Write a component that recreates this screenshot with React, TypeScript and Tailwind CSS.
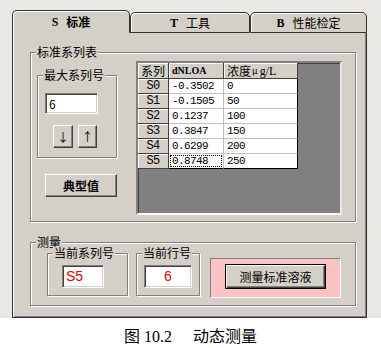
import React from 'react';

const raised =
  'flex items-center justify-center bg-[#d4d0c8] border border-t-white border-l-white border-b-[#404040] border-r-[#404040] shadow-[inset_-1px_-1px_0_#808080]';
const sunken =
  'flex items-center bg-white border border-t-[#808080] border-l-[#808080] border-b-white border-r-white shadow-[inset_1px_1px_0_#404040,inset_-1px_-1px_0_#d4d0c8]';

function Group({ title, className, children }: { title: string; className?: string; children?: React.ReactNode }) {
  return (
    <div className={`relative border border-[#808080] shadow-[inset_1px_1px_0_#fff,1px_1px_0_#fff] ${className ?? ''}`}>
      <span className="absolute left-[5px] -top-[7px] bg-[#d4d0c8] px-[1px] text-[12px] leading-[12px] text-black">
        {title}
      </span>
      {children}
    </div>
  );
}

const rows = [
  ['S0', '-0.3502', '0'],
  ['S1', '-0.1505', '50'],
  ['S2', '0.1237', '100'],
  ['S3', '0.3847', '150'],
  ['S4', '0.6299', '200'],
  ['S5', '0.8748', '250'],
];

const fixedCell =
  'flex items-center justify-center bg-[#d4d0c8] border-r border-b border-[#404040] shadow-[inset_1px_1px_0_#fff]';
const num = "font-['Liberation_Mono',monospace] text-[11px] tracking-[-0.6px]";

function Grid() {
  return (
    <div className="w-[206px] h-[154px] bg-[#808080] border-2 border-t-[#808080] border-l-[#808080] border-b-white border-r-[#e8e8e8] shadow-[inset_1px_1px_0_#404040]">
      <div className="grid grid-cols-[31px_55px_74px] w-[160px]">
        <div className={`${fixedCell} h-[16px] text-[12px]`}>系列</div>
        <div className={`${fixedCell} h-[16px] justify-start pl-[3px] font-['Liberation_Serif',serif] font-bold text-[10px]`}>dNLOA</div>
        <div className={`${fixedCell} h-[16px] justify-start pl-[3px] text-[12px]`}>
          浓度<span className="text-[9px] ml-[1px]">μ</span>
          <span className="font-['Liberation_Serif',serif] text-[12px] ml-[2px]">g/L</span>
        </div>
        {rows.map((r, i) => (
          <React.Fragment key={r[0]}>
            <div className={`${fixedCell} h-[15px] ${num} text-[12px]`}>{r[0]}</div>
            <div className={`h-[15px] bg-white border-r border-b border-[#c0c0c0] ${i === 5 ? 'border-b-black' : ''} p-[1px]`}>
              <div className={`h-full flex items-center pl-[2px] ${num} ${i === 5 ? 'outline-1 outline-dotted outline-black -outline-offset-1' : ''}`}>
                {r[1]}
              </div>
            </div>
            <div className={`h-[15px] flex items-center pl-[3px] bg-white border-r border-b border-[#c0c0c0] border-r-black ${i === 5 ? 'border-b-black' : ''} ${num}`}>
              {r[2]}
            </div>
          </React.Fragment>
        ))}
      </div>
    </div>
  );
}

export default function App() {
  return (
    <div className="w-[381px] h-[348px] font-['Noto_Sans_CJK_SC','Liberation_Sans',sans-serif] text-[12px] text-black">
      <div className="bg-[#e9e8e3] pt-[10px] pl-[12px] h-[318px]">
        {/* tabs */}
        <div className="flex items-end h-[23px] w-[355px]">
          <div className="w-[118px] h-[23px] flex items-center justify-center gap-[8px] bg-[#d4d0c8] border border-b-0 border-[#333] rounded-t-[5px] shadow-[inset_1px_1px_0_#fff] font-bold">
            <span className="font-['Liberation_Serif',serif]">S</span>标准
          </div>
          <div className="w-[120px] h-[21px] flex items-center justify-center gap-[8px] bg-[#d4d0c8] border border-[#333] rounded-t-[5px] shadow-[inset_1px_1px_0_#fff]">
            <span className="font-['Liberation_Serif',serif] font-bold">T</span>工具
          </div>
          <div className="w-[117px] h-[21px] flex items-center justify-center gap-[8px] bg-[#d4d0c8] border border-[#333] rounded-t-[5px] shadow-[inset_1px_1px_0_#fff]">
            <span className="font-['Liberation_Serif',serif] font-bold">B</span>性能检定
          </div>
        </div>

        {/* page */}
        <div className="w-[355px] h-[285px] bg-[#d4d0c8] border-l border-r border-b border-[#333] shadow-[inset_1px_0_0_#fff,inset_-1px_-1px_0_#808080] pl-[17px] pt-[19px]">
          <Group title="标准系列表" className="w-[326px] h-[170px] flex items-start">
            <div className="ml-[6px] mt-[22px] flex flex-col">
              <Group title="最大系列号" className="w-[80px] h-[83px] pl-[7px] pt-[17px]">
                <div className={`${sunken} w-[53px] h-[21px] pl-[3px]`}>6</div>
                <div className="flex gap-[5px] mt-[11px] ml-[8px]">
                  <div className={`${raised} w-[20px] h-[23px]`}>↓</div>
                  <div className={`${raised} w-[19px] h-[23px]`}>↑</div>
                </div>
              </Group>
              <div className={`${raised} w-[72px] h-[23px] ml-[8px] mt-[16px] font-bold`}>典型值</div>
            </div>
            <div className="ml-auto mr-[13px] mt-[8px]">
              <Grid />
            </div>
          </Group>

          <Group title="测量" className="w-[326px] h-[64px] mt-[20px] flex items-start pl-[16px] pt-[10px]">
            <Group title="当前系列号" className="w-[81px] h-[43px] pl-[14px] pt-[11px]">
              <div className={`${sunken} w-[42px] h-[23px] pl-[3px] text-[#e00000] font-['Liberation_Sans',sans-serif] text-[14px]`}>S5</div>
            </Group>
            <Group title="当前行号" className="w-[64px] h-[43px] ml-[8px] pl-[7px] pt-[11px]">
              <div className={`${sunken} w-[48px] h-[23px] justify-center text-[#e00000] font-['Liberation_Sans',sans-serif] text-[14px]`}>6</div>
            </Group>
            <div className="w-[131px] h-[40px] ml-[10px] mt-[5px] bg-[#fcc3c4] border border-t-[#808080] border-l-[#808080] border-b-white border-r-white pl-[15px] pt-[6px]">
              <div className={`${raised} w-[99px] h-[23px] outline outline-1 outline-black`}>测量标准溶液</div>
            </div>
          </Group>
        </div>
      </div>

      {/* caption */}
      <div className="h-[30px] bg-white flex items-center justify-center pt-[8px] text-[16px] font-['Liberation_Serif','Noto_Sans_CJK_SC',serif]">
        <span>图 10.2</span>
        <span className="ml-[21px]">动态测量</span>
      </div>
    </div>
  );
}
